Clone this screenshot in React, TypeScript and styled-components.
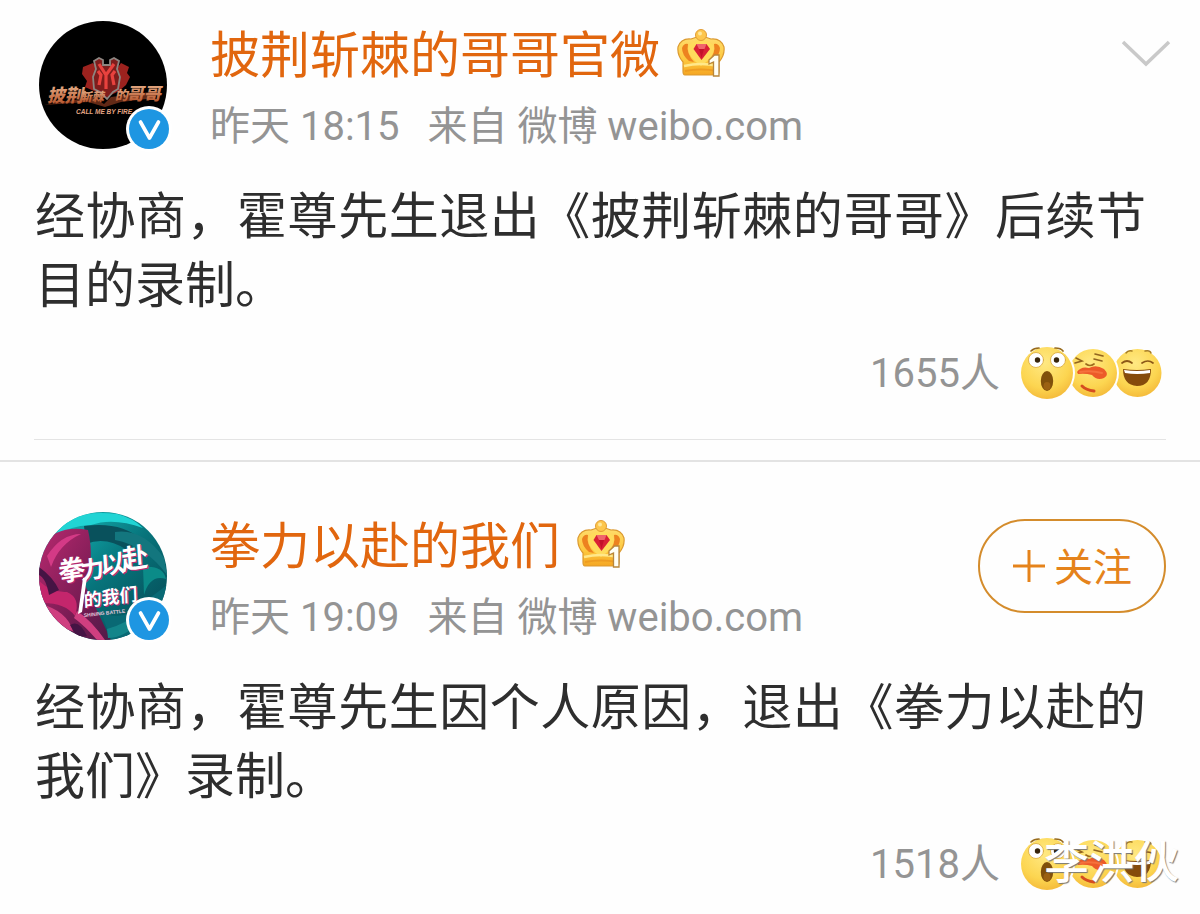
import React from 'react';
import styled, { createGlobalStyle } from 'styled-components';

const GlobalStyle = createGlobalStyle`
  * { box-sizing: border-box; }
  body {
    margin: 0;
    background: #fefefe;
    font-family: Roboto, "Noto Sans CJK SC", sans-serif;
    color: #2e2e2e;
  }
`;

const Feed = styled.main`
  width: 100%;
`;

const Post = styled.article<{ $first?: boolean }>`
  padding: ${p => (p.$first ? 21 : 50)}px 34px 0;
  border-top: ${p => (p.$first ? '0' : '2px solid #e3e3e3')};
`;

const Header = styled.header`
  display: flex;
  align-items: flex-start;
  gap: 43px;
  padding-left: 5px;
`;

const AvatarLink = styled.a`
  position: relative;
  flex: none;
  width: 128px;
  height: 128px;
`;

const AvatarArt = styled.svg`
  display: block;
  width: 128px;
  height: 128px;
`;

const VerifiedBadge = styled.svg`
  position: absolute;
  right: -6px;
  bottom: -4px;
  width: 48px;
  height: 48px;
`;

const Author = styled.div`
  flex: 1;
  min-width: 0;
`;

const NameRow = styled.h2`
  display: flex;
  align-items: center;
  gap: 17px;
  margin: 0;
  font-size: 50px;
  line-height: 70px;
  font-weight: 400;
`;

const NameLink = styled.a`
  color: #e1660e;
  text-decoration: none;
`;

const Crown = styled.svg`
  flex: none;
  width: 48px;
  height: 48px;
  margin-bottom: 6px;
`;

const Meta = styled.p`
  display: flex;
  gap: 28px;
  margin: 0;
  font-size: 40px;
  line-height: 72px;
  color: #949494;
  white-space: nowrap;
`;

const MoreButton = styled.button`
  flex: none;
  margin-top: 16px;
  padding: 0;
  border: 0;
  background: none;
  svg { display: block; width: 54px; height: 32px; margin-right: -7px; }
`;

const FollowButton = styled.button`
  display: flex;
  align-items: center;
  justify-content: center;
  gap: 8px;
  flex: none;
  width: 188px;
  height: 94px;
  margin-top: 7px;
  padding: 0;
  border: 2px solid #d48c2c;
  border-radius: 47px;
  background: none;
  color: #e5831b;
  font: inherit;
  font-size: 39px;
  line-height: 48px;
  svg { width: 34px; height: 34px; }
  span { padding-top: 4px; }
`;

const Body = styled.p`
  margin: 20px 20px 0 1px;
  font-size: 50px;
  line-height: 69px;
  text-align: justify;
`;

const Footer = styled.footer`
  display: flex;
  align-items: center;
  justify-content: flex-end;
  gap: 20px;
  margin-top: 24px;
  padding-right: 2px;
  font-size: 40px;
  line-height: 56px;
  color: #949494;
`;

const Count = styled.span`
  padding-top: 2px;
  line-height: 54px;
`;

const Reactions = styled.div`
  position: relative;
  width: 144px;
  height: 56px;
  svg { display: block; width: 144px; height: 56px; }
`;

const Signature = styled.span`
  position: absolute;
  left: 24px;
  top: 0;
  font-size: 45px;
  font-weight: 500;
  line-height: 56px;
  color: #fff;
  white-space: nowrap;
  text-shadow: 1px 1px 1px #777;
`;

const Divider = styled.hr`
  height: 1px;
  margin: 38px 0 20px;
  border: 0;
  background: #e4e4e4;
`;

const Verified = () => (
  <VerifiedBadge viewBox="0 0 48 48" role="img" aria-label="V">
    <circle cx="24" cy="24" r="23" fill="#fff" />
    <circle cx="24" cy="24" r="20" fill="#1e96e2" />
    <path d="M15.500 17 L24.500 33 L33.500 17" fill="none" stroke="#fff" strokeWidth="3.600" strokeLinejoin="round" strokeLinecap="round" />
  </VerifiedBadge>
);

const CrownIcon = () => (
  <Crown viewBox="0 0 48 48" aria-hidden="true">
    <defs>
      <linearGradient id="gold" x1="0" y1="0" x2="0" y2="1">
        <stop offset="0" stopColor="#ffdc6c" />
        <stop offset="0.6" stopColor="#fdc83e" />
        <stop offset="1" stopColor="#f5a623" />
      </linearGradient>
    </defs>
    <path d="M8 46 Q6 46 6 42 L6 33 Q0 26 1 18 Q4 9 14 10 Q18 8 24 8 Q30 8 34 10 Q44 9 47 18 Q48 26 42 33 L42 42 Q42 46 40 46 Z" fill="url(#gold)" stroke="#dc9a30" strokeWidth="1.2" />
    <path d="M5 19 Q7 14 11 15 Q9 24 17 33 L12 32 Q5 26 5 19 Z M43 19 Q41 14 37 15 Q39 24 31 33 L36 32 Q43 26 43 19 Z" fill="#ed8220" />
    <path d="M11 19 Q14 11 24 11 Q34 11 37 19 Q37 28 24 37 Q11 28 11 19 Z" fill="#ffdb5c" />
    <path d="M7 37 Q24 33 41 37" fill="none" stroke="#ffe88a" strokeWidth="2.500" />
    <path d="M8 42 Q24 39 40 42" fill="none" stroke="#ee9c22" strokeWidth="2" />
    <circle cx="24" cy="6" r="5.500" fill="#fdc64c" stroke="#e29d35" />
    <circle cx="23" cy="4.600" r="2" fill="#ffe79a" />
    <path d="M19.500 15 H29.500 L33 20 L24.500 31 L16.500 20 Z" fill="#d92135" />
    <path d="M19.500 15 H29.500 L27.500 20 H22 Z" fill="#f0656b" />
    <path d="M22 20 H27 L24.500 29 Z" fill="#c3102a" />
    <path d="M32 31 L37.500 26 H42 V47 H36.500 V33 L32 35 Z" fill="#fffef4" stroke="#b8863b" strokeWidth="1.300" />
  </Crown>
);

const BrothersAvatar = () => (
  <AvatarArt viewBox="0 0 128 128" role="img" aria-label="披荆斩棘的哥哥">
    <defs>
      <linearGradient id="bronze" x1="0" y1="0" x2="0" y2="1">
        <stop offset="0" stopColor="#efc09a" />
        <stop offset="1" stopColor="#b0481f" />
      </linearGradient>
    </defs>
    <circle cx="64" cy="64" r="64" fill="#000" />
    <path d="M44 46 L54 42 L57 46 L79 46 L82 42 L90 46 L88 52 L91 56 L87 64 L80 70 L68 76 L55 70 L46 66 L48 60 L43 53 Z" fill="#9c221e" />
    <path d="M55 40 L60 37 L64 39 L64 44 H71 V39 L75 37 L80 40 L78 48 L81 56 L79 68 L74 71 L68 78 L61 71 L55 68 L54 56 L57 48 Z" fill="#7f1d1c" stroke="#8d8580" strokeWidth="1.800" />
    <path d="M60 43 L67 54 L75 43 M67 54 V68 M60 64 L62 54 L59 50 M75 64 L73 54 L76 50" fill="none" stroke="#e8423e" strokeWidth="3.200" />
    <path d="M5 84 L54 76 L65 83 L72 76 L119 70 L116 77 L82 81 L66 86 L49 81 Z" fill="#8b3b20" opacity=".7" />
    <g fontFamily="'Noto Sans CJK SC', sans-serif" fontWeight="900" fill="url(#bronze)">
      <text transform="translate(8 81) skewX(-12)" fontSize="18">披荆</text>
      <text transform="translate(41 80) skewX(-12)" fontSize="12">斩棘</text>
      <text transform="translate(76 79) skewX(-12)" fontSize="13">的</text>
      <text transform="translate(88 79) skewX(-12)" fontSize="17">哥哥</text>
    </g>
    <text x="37" y="93" fontFamily="'Liberation Sans', sans-serif" fontWeight="700" fontStyle="italic" fontSize="6.500" fill="#e3a583">CALL ME BY FIRE</text>
  </AvatarArt>
);

const BoxingAvatar = () => (
  <AvatarArt viewBox="0 0 128 128" role="img" aria-label="拳力以赴的我们">
    <defs>
      <clipPath id="round"><circle cx="64" cy="64" r="64" /></clipPath>
      <linearGradient id="teal" x1="0" y1="0" x2="1" y2="1">
        <stop offset="0" stopColor="#18c8c7" />
        <stop offset=".5" stopColor="#07747b" />
        <stop offset="1" stopColor="#06434f" />
      </linearGradient>
      <linearGradient id="magenta" x1="0" y1="0" x2="1" y2="1">
        <stop offset="0" stopColor="#b8296f" />
        <stop offset=".6" stopColor="#7a1c54" />
        <stop offset="1" stopColor="#501b48" />
      </linearGradient>
    </defs>
    <g clipPath="url(#round)">
      <rect width="128" height="128" fill="url(#teal)" />
      <path d="M16 24 Q31 -4 78 2 Q94 6 104 16 Q74 5 52 13 Q30 14 16 24 Z" fill="#21d4d4" />
      <path d="M45 14 Q82 9 103 28 L88 38 Q67 24 47 32 Z" fill="#09515c" />
      <path d="M76 20 Q104 16 125 46 L128 63 Q107 34 76 28 Z" fill="#13767e" />
      <path d="M0 34 Q20 12 49 18 Q56 48 46 73 L72 128 H0 Z" fill="url(#magenta)" />
      <path d="M8 44 Q22 22 42 22 Q20 32 12 55 Z" fill="#d43a86" />
      <path d="M0 69 Q13 81 28 80 Q42 86 36 104 Q26 90 0 91 Z" fill="#c4266c" />
      <path d="M2 92 Q28 99 34 119 L25 117 Q14 103 2 96 Z M38 99 Q52 108 66 128 H58 Q46 114 35 106 Z" fill="#cf3f80" />
      <path d="M0 55 Q14 65 20 78 L10 83 Q7 66 0 63 Z M31 113 Q40 107 48 124 L38 125 Z" fill="#451444" />
      <path d="M62 100 Q84 111 104 91 L128 73 V128 H72 Z" fill="#096974" />
      <path d="M68 117 Q89 111 99 100 L103 108 Q85 126 69 126 Z" fill="#13858a" />
      <path d="M104 55 Q124 53 127 67 Q111 62 105 83 Z" fill="#0b8b88" />
      <g fontFamily="'Noto Sans CJK SC', sans-serif" fontWeight="700">
        <g fill="#b72770" transform="translate(1 1)">
          <text transform="translate(20 70) rotate(-9) skewX(-5)" fontSize="27">拳</text>
          <text transform="translate(42 68) rotate(-9) skewX(-5)" fontSize="24">力</text>
          <text transform="translate(62 63) rotate(-9) skewX(-5)" fontSize="25">以</text>
          <text transform="translate(83 58) rotate(-9) skewX(-5)" fontSize="27">赴</text>
          <text transform="translate(45 95) rotate(-7) skewX(-5)" fontSize="18">的我们</text>
        </g>
        <g fill="#fff">
          <text transform="translate(20 70) rotate(-9) skewX(-5)" fontSize="27">拳</text>
          <text transform="translate(42 68) rotate(-9) skewX(-5)" fontSize="24">力</text>
          <text transform="translate(62 63) rotate(-9) skewX(-5)" fontSize="25">以</text>
          <text transform="translate(83 58) rotate(-9) skewX(-5)" fontSize="27">赴</text>
          <text transform="translate(45 95) rotate(-7) skewX(-5)" fontSize="18">的我们</text>
        </g>
      </g>
      <path d="M44 66 L39 102 L43 100 L48 65 Z" fill="#fff" />
      <text transform="translate(45 105) rotate(-6)" fontFamily="'Liberation Sans', sans-serif" fontWeight="700" fontSize="5" fill="#e7c8dd">SHINING BATTLE</text>
    </g>
  </AvatarArt>
);

const ReactionFaces = () => (
  <svg viewBox="0 0 144 56" role="img" aria-label="表情">
    <defs>
      <radialGradient id="face" cx=".45" cy=".3" r=".75">
        <stop offset="0" stopColor="#ffe983" />
        <stop offset=".65" stopColor="#fcd550" />
        <stop offset="1" stopColor="#f3b637" />
      </radialGradient>
    </defs>
    <g strokeLinecap="round" fill="none">
      <circle cx="117.500" cy="28" r="24" fill="url(#face)" />
      <path d="M106 8 Q108 5 112 6 M125 6 Q130 5 131 8" stroke="#a67d25" strokeWidth="1.400" />
      <path d="M102 18 Q107 14 112 18 M122 18 Q128 14 133 18" stroke="#8c5817" strokeWidth="1.700" />
      <path d="M103 24 Q117 26 131 24 Q131 41 117 41 Q103 40 103 24 Z" fill="#854b0b" />
      <path d="M104 25 Q117 27 130 25 V28 Q117 30 105 28 Z" fill="#fff" />

      <circle cx="73" cy="28" r="26" fill="#fefefe" />
      <circle cx="73" cy="28" r="24" fill="url(#face)" />
      <path d="M56 13 L62 16 L55 18 M75 9 L83 11 M74 14 L82 16" stroke="#92651f" strokeWidth="1.600" />
      <path d="M66 19 Q70 22 74 19" stroke="#9c6b1d" strokeWidth="1.700" />
      <path d="M57 27 Q61 21 69 23 Q76 19 84 24 Q90 30 84 33 Q77 36 72 30 Q65 28 58 29 Z" fill="#ec5a29" />
      <path d="M60 27 Q71 25 82 28" stroke="#f5713c" strokeWidth="2" />
      <path d="M62 41 Q66 45 74 46" stroke="#d54d20" strokeWidth="3" />

      <circle cx="27" cy="28" r="28" fill="#fefefe" />
      <circle cx="27" cy="28" r="26" fill="url(#face)" />
      <path d="M11 6 Q14 3 19 3 M35 3 Q41 3 43 6" stroke="#986b1d" strokeWidth="1.700" />
      <circle cx="16" cy="15" r="7.500" fill="#fff" stroke="#d9a739" strokeWidth=".8" />
      <circle cx="38" cy="15" r="7.500" fill="#fff" stroke="#d9a739" strokeWidth=".8" />
      <circle cx="17.500" cy="15" r="2.700" fill="#38250c" />
      <circle cx="36.500" cy="15" r="2.700" fill="#38250c" />
      <ellipse cx="27" cy="36" rx="6.200" ry="10" fill="#80500b" />
      <ellipse cx="27" cy="41" rx="3.500" ry="4" fill="#9b6112" />
    </g>
  </svg>
);

type PostProps = {
  first?: boolean;
  name: string;
  time: string;
  text: string;
  count: number;
  avatar: React.ReactNode;
  action: React.ReactNode;
  signature?: string;
};

const FeedPost = ({ first, name, time, text, count, avatar, action, signature }: PostProps) => (
  <Post $first={first}>
    <Header>
      <AvatarLink href="#">
        {avatar}
        <Verified />
      </AvatarLink>
      <Author>
        <NameRow>
          <NameLink href="#">{name}</NameLink>
          <CrownIcon />
        </NameRow>
        <Meta>
          <span>昨天 {time}</span>
          <span>来自 微博 weibo.com</span>
        </Meta>
      </Author>
      {action}
    </Header>
    <Body>{text}</Body>
    <Footer>
      <Count>{count}人</Count>
      <Reactions>
        <ReactionFaces />
        {signature && <Signature>{signature}</Signature>}
      </Reactions>
    </Footer>
    {first && <Divider />}
  </Post>
);

export default function App() {
  return (
    <>
      <GlobalStyle />
      <Feed>
        <FeedPost
          first
          name="披荆斩棘的哥哥官微"
          time="18:15"
          text="经协商，霍尊先生退出《披荆斩棘的哥哥》后续节目的录制。"
          count={1655}
          avatar={<BrothersAvatar />}
          action={
            <MoreButton type="button" aria-label="更多">
              <svg viewBox="0 0 54 32" aria-hidden="true">
                <path d="M4 5 L27 27 L50 5" fill="none" stroke="#c9c9c9" strokeWidth="3.500" />
              </svg>
            </MoreButton>
          }
        />
        <FeedPost
          name="拳力以赴的我们"
          time="19:09"
          text="经协商，霍尊先生因个人原因，退出《拳力以赴的我们》录制。"
          count={1518}
          avatar={<BoxingAvatar />}
          action={
            <FollowButton type="button">
              <svg viewBox="0 0 34 34" aria-hidden="true">
                <path d="M1 17 H33 M17 1 V33" stroke="currentColor" strokeWidth="3" />
              </svg>
              <span>关注</span>
            </FollowButton>
          }
          signature="李洪伙"
        />
      </Feed>
    </>
  );
}
